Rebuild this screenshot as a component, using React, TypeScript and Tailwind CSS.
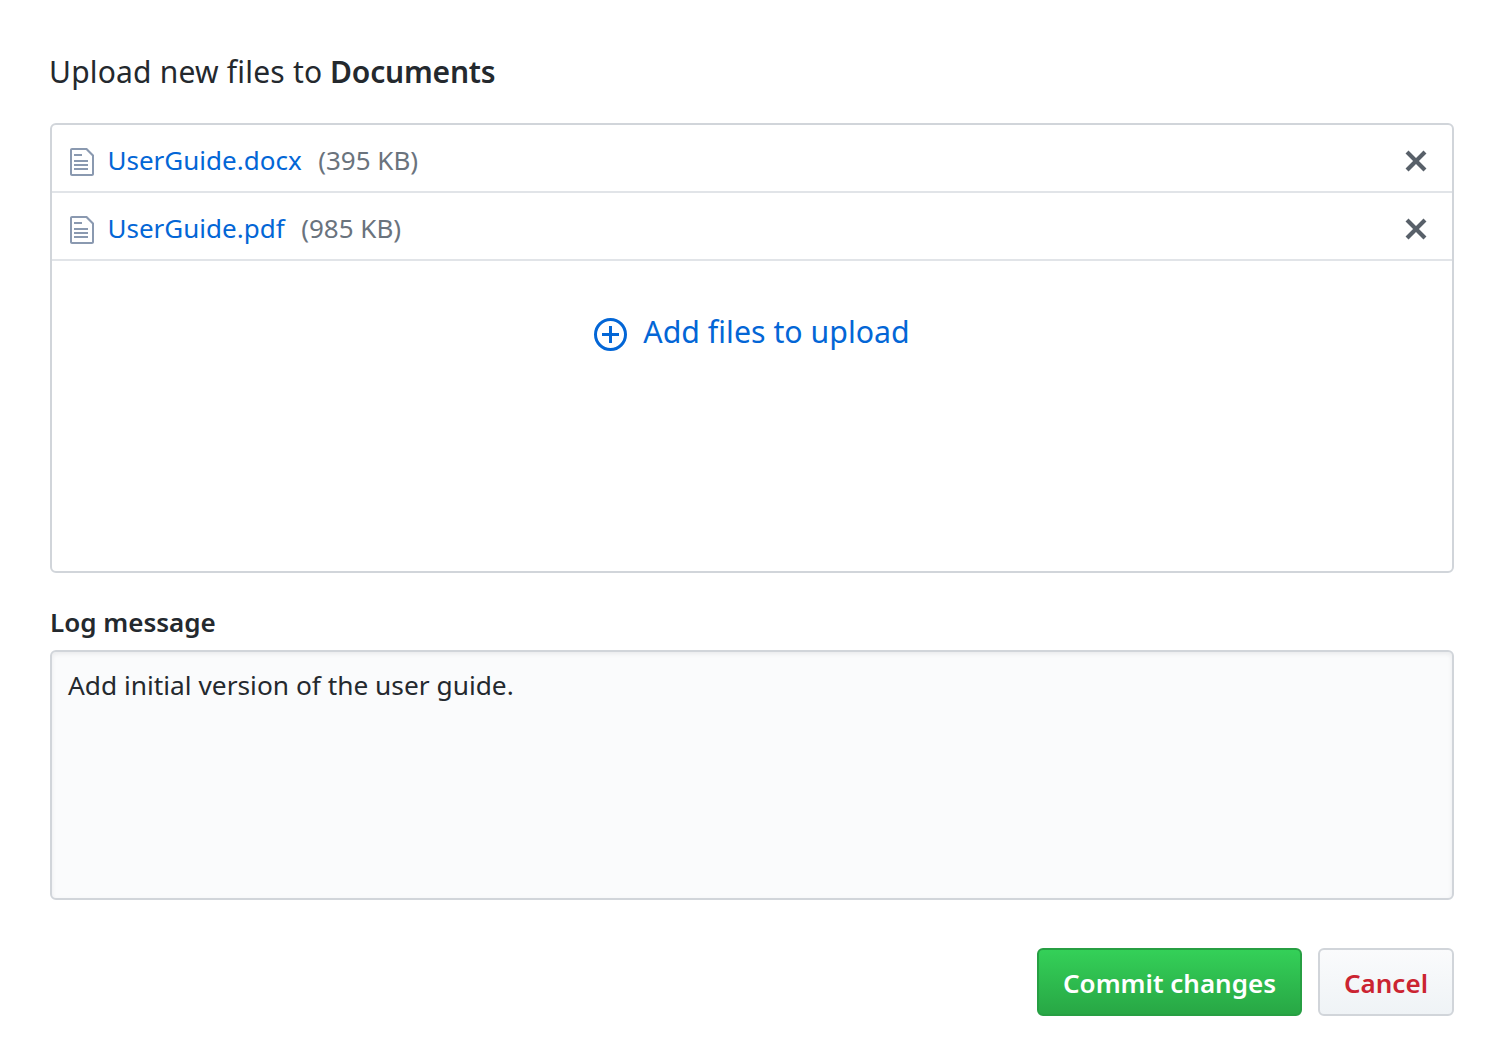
import { type FC } from 'react';

const FileIcon: FC = () => (
  <svg viewBox="0 0 12 16" className="w-[24px] h-[32px] mt-[3px] shrink-0 fill-[#8a99b0]">
    <path d="M6 5H2V4h4v1zM2 8h7V7H2v1zm0 2h7V9H2v1zm0 2h7v-1H2v1zm10-7.5V14c0 .55-.45 1-1 1H1c-.55 0-1-.45-1-1V2c0-.55.45-1 1-1h7.5L12 4.5zM11 5L8 2H1v12h10V5z" />
  </svg>
);

const CloseIcon: FC = () => (
  <svg viewBox="0 0 12 16" className="w-[24px] h-[32px] mt-[1px] fill-[#586069]">
    <path d="M7.48 8l3.75 3.75-1.48 1.48L6 9.48l-3.75 3.75-1.48-1.48L4.52 8 .77 4.25l1.48-1.48L6 6.52l3.75-3.75 1.48 1.48L7.48 8z" />
  </svg>
);

const PlusCircleIcon: FC = () => (
  <svg viewBox="0 0 33 33" className="w-[33px] h-[33px] mt-[3px] shrink-0 fill-none stroke-[#0366d6]">
    <circle cx="16.5" cy="16.5" r="15" strokeWidth="3" />
    <path d="M16.5 8v17M8 16.5h17" strokeWidth="3" />
  </svg>
);

const FileRow: FC<{ name: string; size: string }> = ({ name, size }) => (
  <div className="flex items-center h-[68px] pt-[5px] pl-[18px] pr-[24px] border-b-2 border-[#e1e4e8]">
    <FileIcon />
    <span className="ml-[13.5px] text-[#0366d6]">{name}</span>
    <span className="ml-[16.5px] text-[#6a737d]">{size}</span>
    <span className="ml-auto flex">
      <CloseIcon />
    </span>
  </div>
);

export default function App() {
  return (
    <div className="w-[1500px] h-[1064px] bg-white pl-[50px] pr-[46px] pt-[50px] font-['Noto_Sans',sans-serif] text-[#24292e]">
      <h1 className="-ml-[1px] text-[30px] leading-[44px] font-normal">
        <span className="tracking-[0.2px]">Upload new files to</span>{' '}
        <strong className="font-semibold tracking-[-0.2px]">Documents</strong>
      </h1>

      <div className="mt-[29px] h-[450px] border-2 border-[#d1d5da] rounded-[6px] text-[26px]">
        <FileRow name="UserGuide.docx" size="(395 KB)" />
        <FileRow name="UserGuide.pdf" size="(985 KB)" />
        <div className="flex items-center justify-center gap-[16px] pt-[51px] text-[#0366d6] text-[30.3px] leading-[40px]">
          <PlusCircleIcon />
          <span className="mb-[2px]">Add files to upload</span>
        </div>
      </div>

      <label className="block mt-[31px] text-[26px] leading-[36px] font-semibold">Log message</label>

      <div className="mt-[10px] h-[250px] border-2 border-[#d1d5da] rounded-[6px] bg-[#fafbfc] px-[16px] pt-[13px] text-[26.3px] leading-[40px] shadow-[inset_0_2px_4px_rgba(27,31,35,0.075)]">
        Add initial version of the user guide.
      </div>

      <div className="flex justify-end gap-[16px] mt-[48px]">
        <button className="h-[68px] w-[265px] pt-[2px] rounded-[6px] border-2 border-[#279f43] bg-gradient-to-b from-[#34d058] to-[#28a745] text-white text-[26px] font-semibold">
          Commit changes
        </button>
        <button className="h-[68px] w-[136px] pt-[2px] rounded-[6px] border-2 border-[#d1d5da] bg-gradient-to-b from-[#fafbfc] to-[#eff3f6] text-[#cb2431] text-[26px] font-semibold">
          Cancel
        </button>
      </div>
    </div>
  );
}
